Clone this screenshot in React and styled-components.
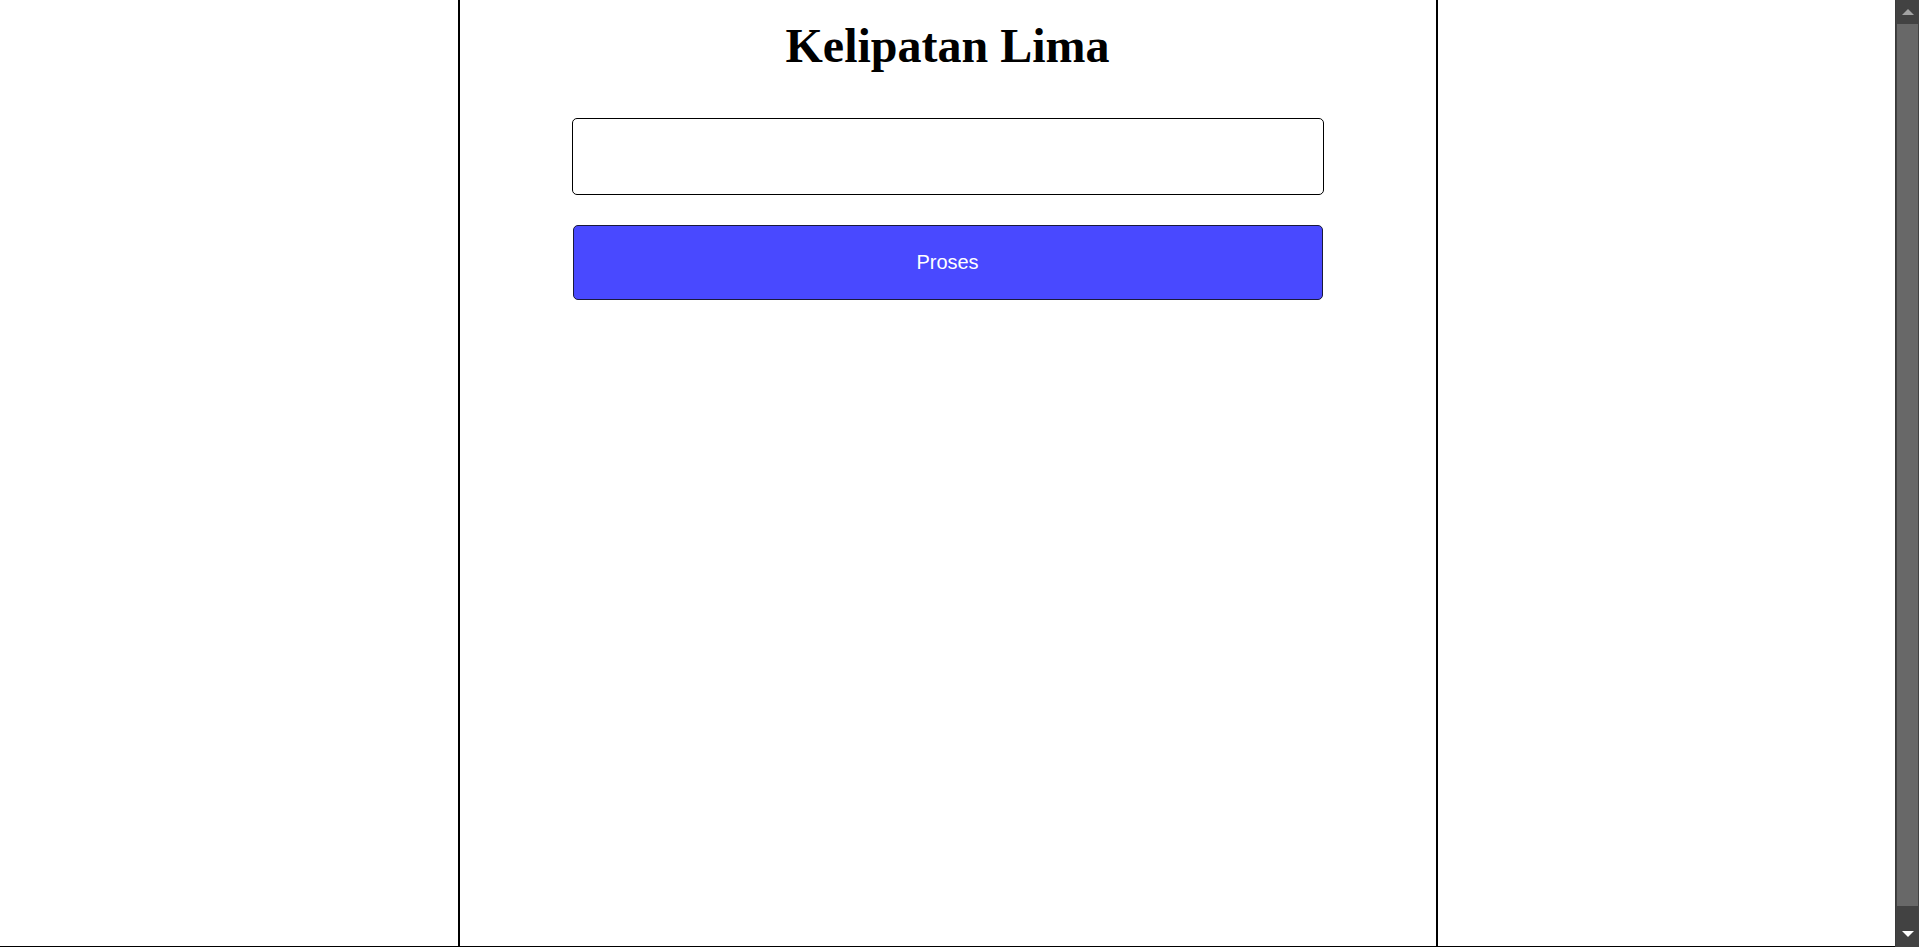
import React, { useState } from 'react';
import styled, { createGlobalStyle } from 'styled-components';

const GlobalStyle = createGlobalStyle`
  html, body {
    margin: 0;
    padding: 0;
    background: #ffffff;
    overflow: hidden;
  }

  body {
    font-family: "Liberation Serif", "Times New Roman", serif;
  }
`;

const Shell = styled.div`
  display: flex;
  height: 100vh;
`;

const Viewport = styled.div`
  flex: 1;
  min-width: 0;
  overflow: hidden;
  display: flex;
  flex-direction: column;
`;

const Container = styled.main`
  flex: none;
  width: 976px;
  min-height: 946px;
  margin: 0 auto;
  border-left: 2px solid #000;
  border-right: 2px solid #000;
  display: flex;
  flex-direction: column;
  align-items: center;
`;

const Title = styled.h1`
  font-family: "Liberation Serif", "Times New Roman", serif;
  font-size: 48px;
  font-weight: 700;
  color: #000;
  margin: 18px 0 45px;
`;

const NumberInput = styled.input`
  box-sizing: border-box;
  width: 752px;
  height: 77px;
  border: 1px solid #000;
  border-radius: 5px;
  padding: 0 12px;
  font-family: "Liberation Sans", Arial, sans-serif;
  font-size: 20px;
  outline: none;
`;

const ProcessButton = styled.button`
  box-sizing: border-box;
  width: 750px;
  height: 75px;
  margin-top: 30px;
  background: #4949ff;
  color: #fff;
  border: 1px solid #1a1a3a;
  border-radius: 5px;
  font-family: "Liberation Sans", Arial, sans-serif;
  font-size: 20px;
  cursor: pointer;
`;

const Result = styled.p`
  font-family: "Liberation Sans", Arial, sans-serif;
  font-size: 20px;
  margin: 24px 0 0;
`;

const Footer = styled.footer`
  flex: none;
  border-top: 1px solid #000;
  height: 27px;
`;

/* window scrollbar as it shows in the screenshot */
const ScrollRail = styled.div`
  flex: none;
  width: 24px;
  background: #424242;
  border-left: 1px solid #3a3a3a;
  box-sizing: border-box;
  display: flex;
  flex-direction: column;
`;

const ArrowButton = styled.div`
  flex: none;
  height: 23px;
  display: flex;
  justify-content: center;
  align-items: ${p => (p.$down ? 'flex-start' : 'flex-start')};
  padding-top: ${p => (p.$down ? '7px' : '9px')};
  box-sizing: border-box;
`;

const Arrow = styled.span`
  width: 0;
  height: 0;
  margin-left: 1px;
  border-left: 6px solid transparent;
  border-right: 6px solid transparent;
  border-top: ${p => (p.$down ? '6px solid #ffffff' : 'none')};
  border-bottom: ${p => (p.$down ? 'none' : '6px solid #a3a3a3')};
`;

const Track = styled.div`
  flex: 1;
  padding: 1px 1px 0 1px;
`;

const Thumb = styled.div`
  height: 882px;
  background: #686868;
`;

const App = () => {
  const [value, setValue] = useState('');
  const [result, setResult] = useState('');

  const handleProses = () => {
    const n = parseInt(value, 10);
    if (isNaN(n)) {
      setResult('');
      return;
    }
    const out = [];
    for (let i = 5; i <= n; i += 5) out.push(i);
    setResult(out.join(', '));
  };

  return (
    <>
      <GlobalStyle />
      <Shell>
        <Viewport>
          <Container>
            <Title>Kelipatan Lima</Title>
            <NumberInput
              type="text"
              value={value}
              onChange={e => setValue(e.target.value)}
            />
            <ProcessButton onClick={handleProses}>Proses</ProcessButton>
            {result && <Result>{result}</Result>}
          </Container>
          <Footer />
        </Viewport>
        <ScrollRail>
          <ArrowButton>
            <Arrow />
          </ArrowButton>
          <Track>
            <Thumb />
          </Track>
          <ArrowButton $down>
            <Arrow $down />
          </ArrowButton>
        </ScrollRail>
      </Shell>
    </>
  );
};

export default App;
